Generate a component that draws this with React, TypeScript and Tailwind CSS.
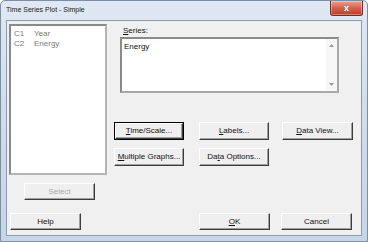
import React from "react";

const font = { fontFamily: '"Liberation Sans", Arial, sans-serif' };

function Btn({
  children,
  w = "w-[70px]",
  h = "h-[18px]",
  def = false,
  disabled = false,
  className = "",
}: {
  children: React.ReactNode;
  w?: string;
  h?: string;
  def?: boolean;
  disabled?: boolean;
  className?: string;
}) {
  return (
    <div
      className={`${w} ${h} ${className} ${
        def ? "border border-black" : ""
      } shrink-0 box-border`}
    >
      <div
        className={`w-full h-full box-border bg-[#efefef] border border-t-white border-l-white border-r-[#3c3c3c] border-b-[#3c3c3c] shadow-[inset_-1px_-1px_0_#a0a0a0] flex items-center justify-center text-[8px] leading-none ${
          disabled ? "text-[#a8a8a8]" : "text-[#111]"
        }`}
      >
        {children}
      </div>
    </div>
  );
}

export default function App() {
  return (
    <div
      style={font}
      className="w-[368px] h-[242px] box-border border border-[#7d8ea3] rounded-t-[5px] bg-gradient-to-b from-[#dfe8f3] via-[#cfdcec] to-[#c6d5e8] flex flex-col overflow-hidden"
    >
      {/* title bar */}
      <div className="h-[19px] flex items-start justify-between shrink-0">
        <div className="pl-[5px] pt-[5px] text-[7px] leading-[8px] text-[#1a1a1a]">
          Time Series Plot - Simple
        </div>
        <div className="mr-[4px] w-[33px] h-[15px] box-border border border-[#7a2a20] border-t-0 rounded-b-[3px] bg-gradient-to-b from-[#e8a293] via-[#d6604c] to-[#c0392a] flex items-center justify-center text-white text-[9px] font-bold leading-none shadow-[inset_0_0_0_1px_rgba(255,255,255,0.35)]">
          x
        </div>
      </div>

      {/* client */}
      <div className="mx-[5px] h-[216px] box-border border border-[#8b9bb0] bg-[#f0f0f0] flex flex-col">
        <div className="flex pl-[2px] pt-[3px]">
          {/* left column */}
          <div className="flex flex-col w-[98px] shrink-0">
            <div className="w-[98px] h-[151px] box-border border-2 border-t-[#8a8a8a] border-l-[#8a8a8a] border-r-[#b4b4b4] border-b-[#b4b4b4] bg-white pt-[3px] pl-[3px] text-[8px] leading-[10px] text-[#7a7a7a]">
              <div className="flex">
                <span className="w-[20px]">C1</span>
                <span>Year</span>
              </div>
              <div className="flex">
                <span className="w-[20px]">C2</span>
                <span>Energy</span>
              </div>
            </div>
            <Btn w="w-[71px]" h="h-[17px]" disabled className="mt-[8px] ml-[15px]">
              Select
            </Btn>
          </div>

          {/* right column */}
          <div className="ml-[7px] flex flex-col">
            <div className="ml-[9px] mt-[2px] h-[10px] text-[8px] leading-[10px] text-[#111]">
              <span className="underline">S</span>eries:
            </div>
            <div className="ml-[6px] mt-[1px] w-[219px] h-[56px] box-border border-2 border-t-[#8a8a8a] border-l-[#8a8a8a] border-r-[#a8a8a8] border-b-[#a8a8a8] bg-white flex">
              <div className="flex-1 pl-[2px] pt-[3px] text-[8px] leading-[10px] text-[#111]">
                Energy
              </div>
              <div className="w-[11px] flex flex-col items-center justify-between py-[5px] bg-[#f7f7f7]">
                <svg width="5" height="3" viewBox="0 0 5 3">
                  <path d="M0 3 L2.5 0 L5 3 Z" fill="#9a9a9a" />
                </svg>
                <svg width="5" height="3" viewBox="0 0 5 3">
                  <path d="M0 0 L2.5 3 L5 0 Z" fill="#9a9a9a" />
                </svg>
              </div>
            </div>
            <div className="mt-[29px] flex">
              <Btn def>
                <span>
                  <span className="underline">T</span>ime/Scale...
                </span>
              </Btn>
              <Btn className="ml-[15px]">
                <span>
                  <span className="underline">L</span>abels...
                </span>
              </Btn>
              <Btn w="w-[71px]" className="ml-[13px]">
                <span>
                  <span className="underline">D</span>ata View...
                </span>
              </Btn>
            </div>
            <div className="mt-[8px] flex">
              <Btn>
                <span>
                  <span className="underline">M</span>ultiple Graphs...
                </span>
              </Btn>
              <Btn className="ml-[15px]">
                <span>
                  Da<span className="underline">t</span>a Options...
                </span>
              </Btn>
            </div>
          </div>
        </div>

        {/* bottom row */}
        <div className="mt-[13px] flex">
          <Btn w="w-[71px]" h="h-[17px]" className="ml-[3px]">
            Help
          </Btn>
          <Btn w="w-[71px]" h="h-[17px]" className="ml-[118px]">
            <span>
              <span className="underline">O</span>K
            </span>
          </Btn>
          <Btn w="w-[71px]" h="h-[17px]" className="ml-[11px]">
            Cancel
          </Btn>
        </div>
      </div>
    </div>
  );
}
